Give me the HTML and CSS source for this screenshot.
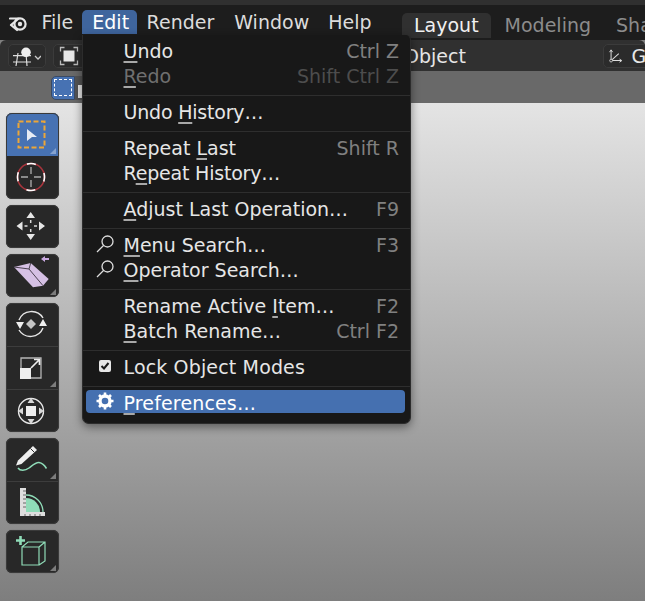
FILE: index.html
```html
<!DOCTYPE html>
<html lang="en">
<head>
<meta charset="utf-8">
<title>Blender Edit menu</title>
<link rel="stylesheet" href="styles.css">
</head>
<body>
<div class="app">
  <div class="strip"></div>
  <header class="topbar">
    <svg class="logo" viewBox="0 0 18 18"><circle cx="11" cy="10" r="5.600" fill="none" stroke="#e6e6e6" stroke-width="2.200"/><circle cx="11" cy="10" r="2.200" fill="#e6e6e6"/><path d="M1 4.500H9.500M2 11L9 5M2 11L8 16" fill="none" stroke="#e6e6e6" stroke-width="2.200" stroke-linecap="round"/></svg>
    <nav class="menus">
      <span class="menu-item file">File</span>
      <span class="menu-item open">Edit</span>
      <span class="menu-item render">Render</span>
      <span class="menu-item window">Window</span>
      <span class="menu-item">Help</span>
    </nav>
    <div class="tabs">
      <span class="tab active">Layout</span>
      <span class="tab">Modeling</span>
      <span class="tab">Shading</span>
    </div>
  </header>
  <div class="header">
    <span class="hbtn mode">
      <svg width="30" height="22" viewBox="0 0 30 22"><path d="M2 10.700H20M2 17H20M7 8L5 21M15 8L16 21" stroke="#ddd" stroke-width="1.200" fill="none"/><circle cx="15" cy="7.300" r="4.800" fill="#eee"/><path d="M24 11l3 3 3-3" stroke="#ccc" stroke-width="1.300" fill="none"/></svg>
    </span>
    <span class="hbtn view">
      <svg width="20" height="20" viewBox="0 0 20 20"><path d="M1.500 5.500V1.500H5.500M14.500 1.500H18.500V5.500M18.500 14.500V18.500H14.500M5.500 18.500H1.500V14.500" stroke="#bbb" stroke-width="1.300" fill="none"/><rect x="4.500" y="4.500" width="11" height="11" fill="#e6e6e6"/></svg>
    </span>
    <span class="object">Object</span>
    <span class="hbtn orient">
      <svg width="20" height="20" viewBox="0 0 20 20"><path d="M4 3V16H17M4 16L14 7" stroke="#ddd" stroke-width="1.300" fill="none"/><path d="M2 5L4 2L6 5M15 14L18 16L15 18" stroke="#ddd" stroke-width="1.200" fill="none"/><circle cx="4" cy="16" r="1.800" fill="#303030" stroke="#ddd"/></svg>
      <span>Global</span>
    </span>
  </div>
  <div class="settings">
    <span class="seg on"><span class="dotted"></span></span>
    <span class="seg off"><span class="solid"></span></span>
  </div>
  <main class="viewport">
    <aside class="toolbar">
      <div class="group">
        <div class="tool on">
          <svg viewBox="0 0 53 43"><rect x="12.500" y="8.500" width="26" height="26" fill="none" stroke="#eda637" stroke-width="2" stroke-dasharray="5 2.500"/><path d="M21 16L31 24H26L21 28Z" fill="#e8ecf4"/><path class="tri-on" d="M50 35V41H44Z"/></svg>
        </div>
        <div class="tool">
          <svg viewBox="0 0 53 43"><circle cx="25" cy="21" r="13.500" fill="none" stroke="#a8343c" stroke-width="1.600"/><circle cx="25" cy="21" r="13.500" fill="none" stroke="#fff" stroke-width="1.600" stroke-dasharray="9 12.200" stroke-dashoffset="4.500"/><path d="M25 11V18M25 24V31M15 21H22M28 21H35" stroke="#8a8a8a" stroke-width="1.800"/></svg>
        </div>
      </div>
      <div class="group">
        <div class="tool">
          <svg viewBox="0 0 53 43"><path d="M24.700 7L29 13H20.400ZM24.700 35L29 29H20.400ZM10.500 21L16.500 16.500V25.500ZM39 21L33 16.500V25.500Z" fill="#e6e6e6"/><path d="M24.700 15V18M24.700 24V27M18.500 21H21.500M28 21H31" stroke="#ddd" stroke-width="1.500"/></svg>
        </div>
      </div>
      <div class="group">
        <div class="tool">
          <svg viewBox="0 0 53 43"><path d="M8 13L24.700 9L42.700 25L37 31.700L27 33.300Z" fill="#d5c0e4"/><path d="M8 13L23 15L24.700 9M23 15L37 31.700" fill="none" stroke="#4a4150" stroke-width="1"/><path d="M35 5L39 2V4H43V6H39V8Z" fill="#c9a8e0"/><path class="tri" d="M50 35V41H44Z"/></svg>
        </div>
      </div>
      <div class="group">
        <div class="tool">
          <svg viewBox="0 0 53 43"><path d="M13 17A13.500 13.500 0 0 1 37 15M37 25A13.500 13.500 0 0 1 13 27" fill="none" stroke="#e6e6e6" stroke-width="1.400"/><path d="M25 16L30 21L25 26L20 21Z" fill="#c4c4c4"/><path d="M10 19H18L14 26ZM33 23H41L37 16Z" fill="#eee"/></svg>
        </div>
        <div class="tool line">
          <svg viewBox="0 0 53 43"><path d="M15 22V12H35V32H25" fill="none" stroke="#b5b5b5" stroke-width="1.300"/><rect x="14" y="22" width="11" height="11" fill="#eee"/><path d="M25 22L33 14M28 13.500H33.500V19" fill="none" stroke="#eee" stroke-width="1.700"/><path class="tri" d="M50 35V41H44Z"/></svg>
        </div>
        <div class="tool line">
          <svg viewBox="0 0 53 43"><circle cx="25" cy="22" r="12.500" fill="none" stroke="#e6e6e6" stroke-width="1.400"/><rect x="20" y="17" width="10" height="10" fill="#eee"/><path d="M25 9L28.500 14H21.500ZM25 35L28.500 30H21.500ZM12 22L17 18.500V25.500ZM38 22L33 18.500V25.500Z" fill="#d8d8d8"/></svg>
        </div>
      </div>
      <div class="group">
        <div class="tool">
          <svg viewBox="0 0 53 43"><path d="M10 27.500L12 22.500L27 8L31 12L15.500 26Z" fill="#eee"/><path d="M24.500 10.500L28.500 14.500" stroke="#2b2b2b" stroke-width="1"/><path d="M12 30C14 33 19 33 23 30C27 27 30 24 33 24.500C36 25 39 28 40.500 30.500" fill="none" stroke="#8fdcb8" stroke-width="1.500"/><path class="tri" d="M50 35V41H44Z"/></svg>
        </div>
        <div class="tool line">
          <svg viewBox="0 0 53 43"><path d="M20 17A14 14 0 0 1 34 31H20Z" fill="#8fdcb8"/><path d="M20 14A17 17 0 0 1 37 31" fill="none" stroke="#8fdcb8" stroke-width="1.300"/><path d="M14 7H20V31H39V35H14Z" fill="#dedede"/><path d="M17 10H20M17 14H20M17 18H20M17 22H20M17 26H20M19 33V35M24 33V35M29 33V35M34 33V35" stroke="#666" stroke-width="1"/></svg>
        </div>
      </div>
      <div class="group">
        <div class="tool">
          <svg viewBox="0 0 53 43"><path d="M16 17H33V35H16ZM16 17L22 12H39V31L33 35M33 17L39 12" fill="none" stroke="#8fdcb8" stroke-width="1.200"/><path d="M14.500 6V15M10 10.500H19" stroke="#8fdcb8" stroke-width="2.600"/><path class="tri" d="M50 35V41H44Z"/></svg>
        </div>
      </div>
    </aside>
  </main>
  <div class="menu">
    <div class="row"><span class="label"><u>U</u>ndo</span><span class="key">Ctrl Z</span></div>
    <div class="row off"><span class="label"><u>R</u>edo</span><span class="key">Shift Ctrl Z</span></div>
    <div class="sep"></div>
    <div class="row"><span class="label tight">Undo <u>H</u>istory…</span></div>
    <div class="sep"></div>
    <div class="row"><span class="label">Repeat <u>L</u>ast</span><span class="key">Shift R</span></div>
    <div class="row"><span class="label tight">R<u>e</u>peat History…</span></div>
    <div class="sep"></div>
    <div class="row"><span class="label"><u>A</u>djust Last Operation…</span><span class="key">F9</span></div>
    <div class="sep"></div>
    <div class="row">
      <svg class="icon" viewBox="0 0 20 20"><circle cx="12.500" cy="7.500" r="5.500" fill="none" stroke="#ddd" stroke-width="1.300"/><path d="M8.500 11.500L2 18" stroke="#ddd" stroke-width="1.300"/></svg>
      <span class="label"><u>M</u>enu Search…</span><span class="key">F3</span>
    </div>
    <div class="row">
      <svg class="icon" viewBox="0 0 20 20"><circle cx="12.500" cy="7.500" r="5.500" fill="none" stroke="#ddd" stroke-width="1.300"/><path d="M8.500 11.500L2 18" stroke="#ddd" stroke-width="1.300"/></svg>
      <span class="label"><u>O</u>perator Search…</span>
    </div>
    <div class="sep"></div>
    <div class="row"><span class="label">Rename Active <u>I</u>tem…</span><span class="key">F2</span></div>
    <div class="row"><span class="label"><u>B</u>atch Rename…</span><span class="key">Ctrl F2</span></div>
    <div class="sep"></div>
    <div class="row">
      <svg class="icon" viewBox="0 0 20 20"><rect x="4" y="4" width="12" height="12" rx="2" fill="#e6e6e6"/><path d="M6.500 10L9 12.500L13.500 7" fill="none" stroke="#181818" stroke-width="2"/></svg>
      <span class="label wide">Lock Object Modes</span>
    </div>
    <div class="sep"></div>
    <div class="row active">
      <svg class="icon" viewBox="0 0 20 20"><circle cx="10" cy="10" r="5" fill="none" stroke="#fff" stroke-width="3.400"/><path d="M10 1.500V18.500M1.500 10H18.500M4 4L16 16M16 4L4 16" stroke="#fff" stroke-width="2.600" stroke-dasharray="3.200 10.600 3.200 0"/></svg>
      <span class="label wide"><u>P</u>references…</span>
    </div>
  </div>
</div>
</body>
</html>
```
FILE: styles.css
```css
* { box-sizing: border-box; }
html, body { margin: 0; height: 100%; overflow: hidden; }
body { background: #808080; font-family: "DejaVu Sans", sans-serif; font-size: 19px; color: #e6e6e6; }
.app { position: relative; width: 645px; height: 601px; display: flex; flex-direction: column; overflow: hidden; }
.strip { height: 5px; background: #303030; }
.topbar { height: 35px; background: #1d1d1d; display: flex; align-items: flex-start; white-space: nowrap; }
.logo { width: 18px; height: 18px; margin: 9px 0 0 9px; flex: none; }
.menus { display: flex; margin: 5px 0 0 5px; }
.menu-item { height: 24px; line-height: 24px; padding: 0 9.500px; color: #dcdcdc; }
.menu-item.file { padding-right: 9px; }
.menu-item.render { padding-right: 10.500px; }
.menu-item.window { padding-right: 9.500px; }
.menu-item.open { background: #3f659d; color: #fff; border-radius: 5px 5px 0 0; padding: 0 8px 0 10px; }
.tabs { display: flex; margin: 8px 0 0 21px; }
.tab { height: 25px; line-height: 25px; padding: 0 12px; color: #8c8c8c; margin-right: 1px; }
.tab.active { background: #303030; color: #f0f0f0; border-radius: 5px 5px 0 0; margin-right: 2px; }
.header { height: 31px; background: #303030; border-radius: 6px 6px 0 0; display: flex; align-items: center; padding-left: 8px; white-space: nowrap; overflow: hidden; }
.hbtn { height: 24px; border: 1px solid #3b3b3b; border-radius: 5px; display: flex; align-items: center; background: #2b2b2b; flex: none; }
.mode { width: 38px; padding-left: 2px; }
.view { width: 40px; margin-left: 7px; padding-left: 5px; }
.object { margin-left: 311px; color: #e6e6e6; flex: none; width: 199px; }
.orient { padding-left: 4px; gap: 8px; width: 90px; }
.settings { height: 32px; background: #696969; display: flex; align-items: center; padding: 1px 0 0 51px; }
.seg { height: 24px; display: flex; align-items: center; }
.seg.on { width: 24px; justify-content: center; background: #4772b3; border-radius: 5px 0 0 5px; border: 1px solid #3a4a63; }
.seg.off { width: 40px; background: #545454; padding-left: 3px; }
.dotted { width: 18px; height: 17px; border: 1.500px dashed #fff; }
.solid { width: 18px; height: 13px; margin-top: 8px; background: #e6e6e6; }
.viewport { flex: 1; background: linear-gradient(#e4e4e4, #7e7e7e); padding: 10px 0 0 6px; }
.toolbar { display: flex; flex-direction: column; gap: 6px; width: 53px; }
.group { background: #282828; outline: 1px solid #3a3a3a; outline-offset: -1px; border-radius: 6px; overflow: hidden; box-shadow: 0 0 1px rgba(0, 0, 0, 0.4); }
.tool { height: 43px; }
.tool svg { display: block; width: 53px; height: 43px; }
.tool.on { background: #4772b3; }
.tool.line { border-top: 1px solid #3d3d3d; }
.tool.line svg { margin-top: -1px; }
.tri { fill: #7c7c7c; }
.tri-on { fill: #86a3cf; }
.menu { position: absolute; left: 82px; top: 35px; width: 329px; height: 389px; background: #181818; border: 1px solid #2c2c2c; border-top: 0; border-radius: 0 5px 7px 7px; padding: 3px 0 9px; box-shadow: 0 3px 10px rgba(0, 0, 0, 0.45); }
.row { position: relative; height: 25px; display: flex; align-items: center; justify-content: space-between; padding: 0 11px 0 40.500px; white-space: nowrap; }
.row.off .label { color: #6f6f6f; }
.row.off .key { color: #4d4d4d; }
.row.active { height: 23px; margin: 2px 5px 0 3px; padding: 2px 6px 0 37.500px; background: #4570b0; border-radius: 4px; color: #fff; }
.key { color: #808080; }
.sep { height: 1px; margin: 7px 0 3px; background: #2e2e2e; }
.label u { text-decoration-color: #a8a8a8; text-decoration-thickness: 2px; text-underline-offset: 3px; text-decoration-skip-ink: none; }
.label.tight { letter-spacing: -0.2px; }
.label.wide { letter-spacing: 0.15px; }
.icon { position: absolute; left: 12px; top: 2px; width: 20px; height: 20px; }
.row.active .icon { left: 9px; top: 1px; }
```
